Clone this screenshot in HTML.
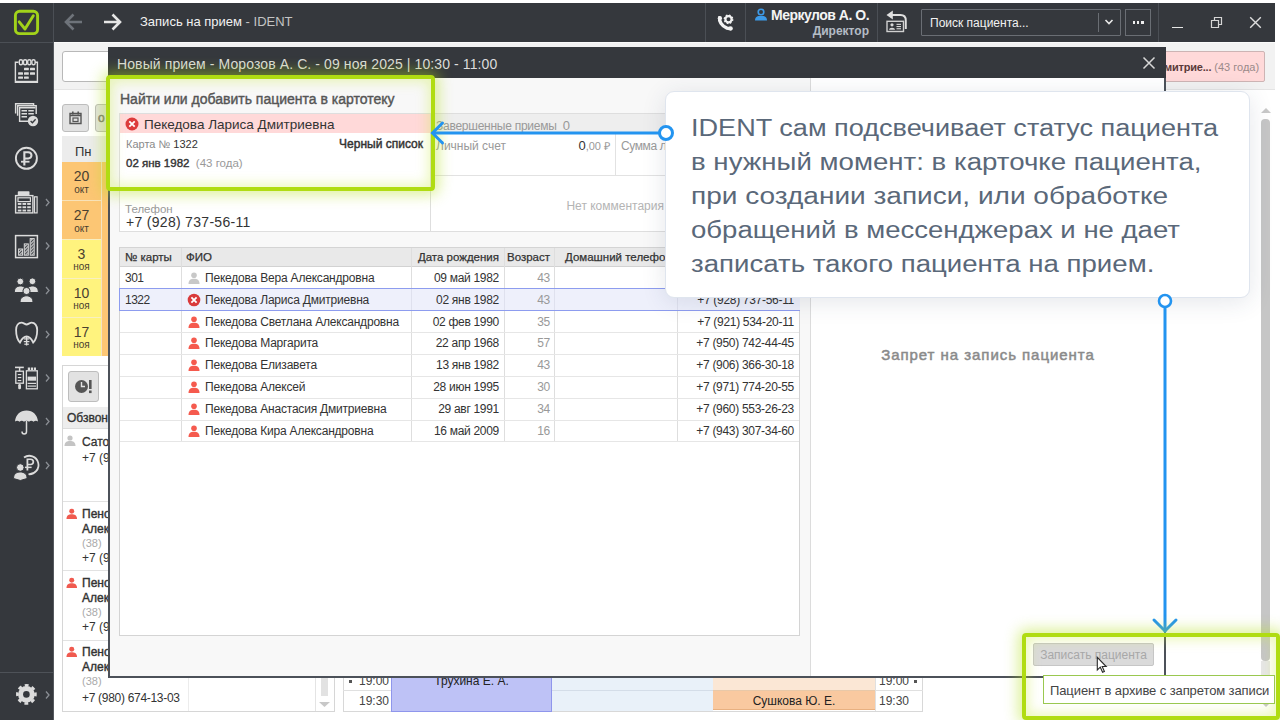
<!DOCTYPE html>
<html><head><meta charset="utf-8">
<style>
*{margin:0;padding:0;box-sizing:border-box}
html,body{width:1280px;height:720px;overflow:hidden;background:#fff;font-family:"Liberation Sans",sans-serif;position:relative}
.a{position:absolute}
.t{position:absolute;white-space:nowrap;line-height:1}
</style></head><body>
<!-- background content -->
<div class="a" style="left:54px;top:42px;width:1221px;height:678px;background:#fff"></div>
<div class="a" style="left:54px;top:42px;width:1221px;height:1px;background:#fafafa"></div>
<div class="a" style="left:54px;top:43px;width:1221px;height:47px;background:#f2f2f2;border-bottom:1px solid #e4e4e4"></div>
<div class="a" style="left:62px;top:51px;width:200px;height:31px;background:#fff;border:1px solid #b8b8b8;border-radius:3px"></div>
<!-- pink badge -->
<div class="a" style="left:1100px;top:51px;width:165px;height:31px;background:#ffd9d9;border:1px solid #cdb4b4;border-radius:2px"></div>
<div class="t" style="left:1164px;top:62px;font-size:11px;color:#5a3a3a;font-weight:bold;letter-spacing:-0.2px">митрие...<span style="font-weight:normal;color:#9a8a8a;letter-spacing:0"> (43 года)</span></div>
<!-- scrollbar right -->
<svg class="a" style="left:1259px;top:106px" width="14" height="8" viewBox="0 0 14 8"><path d="M2 7 L7 2 L12 7 Z" fill="#c8c8c8"/></svg>
<div class="a" style="left:1261px;top:119px;width:9px;height:542px;background:#c6c6c6;border-radius:4px"></div>
<div class="a" style="left:1261px;top:661px;width:9px;height:40px;background:#e6e6e6"></div>
<svg class="a" style="left:1259px;top:701px" width="14" height="8" viewBox="0 0 14 8"><path d="M2 1 L7 6 L12 1 Z" fill="#c8c8c8"/></svg>
<!-- calendar buttons -->
<div class="a" style="left:62px;top:104px;width:27px;height:28px;background:#e2e2e2;border:1px solid #bdbdbd;border-radius:3px"></div>
<svg class="a" style="left:68px;top:110px" width="15" height="15" viewBox="0 0 15 15"><path d="M2 3.5 H13 V13.5 H2 Z M2 5.5 H13" fill="none" stroke="#555" stroke-width="1.4"/><rect x="4" y="1.5" width="1.6" height="3" fill="#555"/><rect x="9.4" y="1.5" width="1.6" height="3" fill="#555"/><rect x="5" y="8" width="5" height="3.5" fill="none" stroke="#555" stroke-width="1.2"/></svg>
<div class="a" style="left:95px;top:104px;width:40px;height:28px;background:#e2e2e2;border:1px solid #bdbdbd;border-radius:3px"></div>
<div class="t" style="left:98px;top:112px;font-size:12px;color:#777;-webkit-text-stroke:0.5px #777">о</div>
<!-- week calendar column -->
<div class="a" style="left:62px;top:136px;width:60px;height:26px;background:#ececec"></div>
<div class="t" style="left:75px;top:144.5px;font-size:13px;color:#333">Пн</div>
<div class="a" style="left:62px;top:162px;width:39px;height:77px;background:#fcc674"></div>
<div class="a" style="left:62px;top:239px;width:39px;height:117px;background:#fff37e"></div>
<div class="a" style="left:102px;top:162px;width:20px;height:194px;background:#fcc674"></div>
<div class="a" style="left:101px;top:162px;width:1px;height:194px;background:#f2e3c4"></div>
<div class="a" style="left:62px;top:200px;width:39px;height:1px;background:#f8e2b8"></div>
<div class="a" style="left:62px;top:239px;width:39px;height:1px;background:#f8eec0"></div>
<div class="a" style="left:62px;top:278px;width:39px;height:1px;background:#f8f0c0"></div>
<div class="a" style="left:62px;top:317px;width:39px;height:1px;background:#f8f0c0"></div>
<div class="t" style="left:62px;top:169px;width:39px;text-align:center;font-size:14px;color:#4a4030">20</div>
<div class="t" style="left:62px;top:185px;width:39px;text-align:center;font-size:10px;color:#4a4030">окт</div>
<div class="t" style="left:62px;top:208px;width:39px;text-align:center;font-size:14px;color:#4a4030">27</div>
<div class="t" style="left:62px;top:224px;width:39px;text-align:center;font-size:10px;color:#4a4030">окт</div>
<div class="t" style="left:62px;top:247px;width:39px;text-align:center;font-size:14px;color:#4a4030">3</div>
<div class="t" style="left:62px;top:262px;width:39px;text-align:center;font-size:10px;color:#4a4030">ноя</div>
<div class="t" style="left:62px;top:286px;width:39px;text-align:center;font-size:14px;color:#4a4030">10</div>
<div class="t" style="left:62px;top:301px;width:39px;text-align:center;font-size:10px;color:#4a4030">ноя</div>
<div class="t" style="left:62px;top:325px;width:39px;text-align:center;font-size:14px;color:#4a4030">17</div>
<div class="t" style="left:62px;top:340px;width:39px;text-align:center;font-size:10px;color:#4a4030">ноя</div>
<!-- Obzvon panel -->
<div class="a" style="left:62px;top:365px;width:273px;height:347px;background:#fff;border:1px solid #d6d6d6"></div>
<div class="a" style="left:68px;top:371px;width:31px;height:31px;background:#e2e2e2;border:1px solid #bdbdbd;border-radius:3px"></div>
<svg class="a" style="left:74px;top:378px" width="20" height="17" viewBox="0 0 20 17"><circle cx="7.5" cy="8.5" r="6.5" fill="#555"/><path d="M7.5 4 V8.5 H11" fill="none" stroke="#e2e2e2" stroke-width="1.4"/><rect x="15" y="2" width="2.6" height="9" fill="#555"/><rect x="15" y="12.5" width="2.6" height="2.6" fill="#555"/></svg>
<div class="a" style="left:63px;top:407px;width:271px;height:22px;background:#ededed;border-bottom:1px solid #dcdcdc"></div>
<div class="t" style="left:67px;top:412px;font-size:12px;color:#333;-webkit-text-stroke:0.35px #333">Обзвон</div>
<svg class="a" style="left:64px;top:435px" width="12" height="11" viewBox="0 0 12 11"><circle cx="6" cy="3" r="2.6" fill="#c4c4c4"/><path d="M0.5 11 C0.5 7 3 6 6 6 C9 6 11.5 7 11.5 11 Z" fill="#c4c4c4"/></svg>
<div class="t" style="left:82px;top:436px;font-size:12px;color:#333;-webkit-text-stroke:0.3px #333">Сато</div>
<div class="t" style="left:82px;top:452px;font-size:12px;color:#333">+7 (9</div>
<div class="a" style="left:63px;top:501px;width:271px;height:1px;background:#e2e2e2"></div>
<div class="a" style="left:63px;top:570px;width:271px;height:1px;background:#e2e2e2"></div>
<div class="a" style="left:63px;top:640px;width:271px;height:1px;background:#e2e2e2"></div>
<div class="a" style="left:188px;top:641px;width:1px;height:70px;background:#ececec"></div>
<div class="a" style="left:315px;top:641px;width:1px;height:70px;background:#e4e4e4"></div>
<div class="a" style="left:321px;top:660px;width:7px;height:36px;background:#e2e2e2"></div>
<svg class="a" style="left:318px;top:701px" width="13" height="7" viewBox="0 0 13 7"><path d="M1 1 L6.5 6 L12 1 Z" fill="#c8c8c8"/></svg>
<!-- patient rows -->
<svg class="a" style="left:65.5px;top:507.5px" width="11.5" height="11.5" viewBox="0 0 12 11"><circle cx="6" cy="3" r="2.6" fill="#f05a4f"/><path d="M0.5 11 C0.5 7 3 6 6 6 C9 6 11.5 7 11.5 11 Z" fill="#f05a4f"/></svg>
<div class="t" style="left:82px;top:508px;font-size:12px;color:#333;-webkit-text-stroke:0.4px #333">Пено</div>
<div class="t" style="left:82px;top:523px;font-size:12px;color:#333;-webkit-text-stroke:0.4px #333">Алек</div>
<div class="t" style="left:82px;top:538px;font-size:11px;color:#aaa">(38)</div>
<div class="t" style="left:82px;top:552px;font-size:12px;color:#333">+7 (9</div>
<svg class="a" style="left:65.5px;top:576.5px" width="11.5" height="11.5" viewBox="0 0 12 11"><circle cx="6" cy="3" r="2.6" fill="#f05a4f"/><path d="M0.5 11 C0.5 7 3 6 6 6 C9 6 11.5 7 11.5 11 Z" fill="#f05a4f"/></svg>
<div class="t" style="left:82px;top:577px;font-size:12px;color:#333;-webkit-text-stroke:0.4px #333">Пено</div>
<div class="t" style="left:82px;top:592px;font-size:12px;color:#333;-webkit-text-stroke:0.4px #333">Алек</div>
<div class="t" style="left:82px;top:607px;font-size:11px;color:#aaa">(38)</div>
<div class="t" style="left:82px;top:621px;font-size:12px;color:#333">+7 (9</div>
<svg class="a" style="left:65.5px;top:645.5px" width="11.5" height="11.5" viewBox="0 0 12 11"><circle cx="6" cy="3" r="2.6" fill="#f05a4f"/><path d="M0.5 11 C0.5 7 3 6 6 6 C9 6 11.5 7 11.5 11 Z" fill="#f05a4f"/></svg>
<div class="t" style="left:82px;top:646px;font-size:12px;color:#333;-webkit-text-stroke:0.4px #333">Пено</div>
<div class="t" style="left:82px;top:661px;font-size:12px;color:#333;-webkit-text-stroke:0.4px #333">Алек</div>
<div class="t" style="left:82px;top:676px;font-size:11px;color:#aaa">(38)</div>
<div class="t" style="left:82px;top:692px;font-size:12px;color:#333;letter-spacing:-0.3px">+7 (980) 674-13-03</div>
<!-- schedule grid -->
<div class="a" style="left:343px;top:670px;width:580px;height:41px;background:#fff"></div>
<div class="a" style="left:343px;top:670px;width:1px;height:42px;background:#d8d8d8"></div>
<div class="a" style="left:343px;top:690px;width:48px;height:1px;background:#e0e0e0"></div>
<div class="a" style="left:343px;top:711px;width:580px;height:1px;background:#d8d8d8"></div>
<div class="a" style="left:349px;top:680px;width:3px;height:3px;background:#555"></div>
<div class="t" style="left:357px;top:675px;width:32px;text-align:right;font-size:12px;color:#444">19:00</div>
<div class="t" style="left:357px;top:695px;width:32px;text-align:right;font-size:12px;color:#444">19:30</div>
<div class="a" style="left:391px;top:670px;width:161px;height:42px;background:#bec2f6;border:1px solid #8f96ec;border-top:none"></div>
<div class="t" style="left:391px;top:674.5px;width:161px;text-align:center;font-size:12px;color:#222">Трухина Е. А.</div>
<div class="a" style="left:552px;top:670px;width:161px;height:41px;background:#e9f1f9"></div>
<div class="a" style="left:552px;top:690px;width:161px;height:1px;background:#d4dde8"></div>
<div class="a" style="left:713px;top:670px;width:162px;height:21px;background:#fbe7d5"></div>
<div class="a" style="left:713px;top:691px;width:162px;height:19px;background:#f9c9a0;border-bottom:1px solid #e8b080"></div>
<div class="a" style="left:713px;top:690px;width:162px;height:1px;background:#e8c8a8"></div>
<div class="t" style="left:713px;top:695px;width:162px;text-align:center;font-size:12px;color:#222">Сушкова Ю. Е.</div>
<div class="a" style="left:875px;top:670px;width:48px;height:41px;background:#fff;border-left:1px solid #e0e0e0;border-right:1px solid #d8d8d8"></div>
<div class="a" style="left:875px;top:690px;width:48px;height:1px;background:#e0e0e0"></div>
<div class="t" style="left:879px;top:675px;font-size:12px;color:#444">19:00</div>
<div class="a" style="left:914px;top:680px;width:3px;height:3px;background:#555"></div>
<div class="t" style="left:879px;top:695px;font-size:12px;color:#444">19:30</div>
<!-- top bar -->
<div class="a" style="left:0;top:0;width:1280px;height:3px;background:#fff"></div>
<div class="a" style="left:0;top:3px;width:1275px;height:39px;background:#35383d"></div>
<div class="a" style="left:0;top:42px;width:53px;height:678px;background:#35383d"></div>
<div class="a" style="left:0;top:42px;width:53px;height:1px;background:#4b4f55"></div>
<div class="a" style="left:53px;top:3px;width:1px;height:39px;background:#4b4f55"></div>
<div class="a" style="left:53px;top:42px;width:1px;height:678px;background:#55595e"></div>
<!-- logo -->
<svg class="a" style="left:12px;top:8px" width="30" height="30" viewBox="0 0 30 30">
<rect x="3.4" y="3.3" width="22.2" height="22.3" rx="4.2" fill="none" stroke="#a2d31a" stroke-width="2.9"/>
<path d="M7.2 13.8 L13 21 L21.3 7.8" fill="none" stroke="#a2d31a" stroke-width="2.9" stroke-linecap="round" stroke-linejoin="round"/>
</svg>
<!-- arrows -->
<svg class="a" style="left:64px;top:12px" width="20" height="20" viewBox="0 0 20 20">
<path d="M2 10 H18 M9.5 2.5 L2 10 L9.5 17.5" fill="none" stroke="#6e737a" stroke-width="2.6"/>
</svg>
<svg class="a" style="left:102px;top:12px" width="20" height="20" viewBox="0 0 20 20">
<path d="M2 10 H18 M10.5 2.5 L18 10 L10.5 17.5" fill="none" stroke="#e6e6e6" stroke-width="2.6"/>
</svg>
<div class="t" style="left:140px;top:15px;font-size:13px;color:#f2f2f2">Запись на прием <span style="color:#c4c4c4">- IDENT</span></div>
<!-- separators -->
<div class="a" style="left:705px;top:3px;width:1px;height:39px;background:#4b4f55"></div>
<div class="a" style="left:745px;top:3px;width:1px;height:39px;background:#4b4f55"></div>
<div class="a" style="left:877px;top:3px;width:1px;height:39px;background:#4b4f55"></div>
<div class="a" style="left:1158px;top:3px;width:1px;height:39px;background:#4b4f55"></div>
<!-- phone gear -->
<svg class="a" style="left:705px;top:5px" width="40" height="35" viewBox="705 5 40 35">
<path d="M719.6 17.8 C719 21 721.5 26 727 28.2 L730.8 28.8" fill="none" stroke="#f2f2f2" stroke-width="3.4" stroke-linecap="round"/>
<circle cx="719.9" cy="18.2" r="2.1" fill="#f2f2f2"/><circle cx="730.6" cy="28.4" r="2.1" fill="#f2f2f2"/>
<circle cx="728.5" cy="19.3" r="3.1" fill="none" stroke="#f2f2f2" stroke-width="2.2"/>
<circle cx="728.5" cy="19.3" r="4.1" fill="none" stroke="#f2f2f2" stroke-width="1.6" stroke-dasharray="1.6 1.62"/>
</svg>
<!-- user -->
<svg class="a" style="left:754px;top:8px" width="14" height="13" viewBox="0 0 14 13">
<circle cx="7" cy="4" r="2.8" fill="none" stroke="#3d9be9" stroke-width="1.6"/>
<path d="M1 12.5 C1 9 3.5 8 5 8 L9 8 C10.5 8 13 9 13 12.5 Z" fill="#3d9be9"/>
</svg>
<div class="t" style="left:771px;top:8px;font-size:14px;color:#f4f4f4;font-weight:bold;letter-spacing:-0.5px">Меркулов А. О.</div>
<div class="t" style="left:810px;top:25px;width:59px;text-align:right;font-size:12px;color:#b4bcc6;font-weight:bold">Директор</div>
<!-- return card icon -->
<svg class="a" style="left:885px;top:9px" width="26" height="25" viewBox="0 0 26 25">
<path d="M7 6 H15.5 C19 6 20.8 8.5 20.8 11.5 V20" fill="none" stroke="#e0e0e0" stroke-width="1.9"/>
<path d="M1.5 6 L7.8 1.5 V10.5 Z" fill="#e0e0e0"/>
<rect x="2" y="12.3" width="16.5" height="10.2" fill="none" stroke="#d0d0d0" stroke-width="1.4"/>
<circle cx="7" cy="15.8" r="1.6" fill="#d8d8d8"/>
<path d="M4 20.8 C4 18 10 18 10 20.8 Z" fill="#d8d8d8"/>
<rect x="11.5" y="14.8" width="4.5" height="1.1" fill="#d8d8d8"/><rect x="11.5" y="17" width="4.5" height="1.1" fill="#d8d8d8"/><rect x="11.5" y="19.2" width="4.5" height="1.1" fill="#d8d8d8"/>
</svg>
<!-- search -->
<div class="a" style="left:921px;top:9px;width:200px;height:27px;border:1px solid #6a6e74;border-radius:1px"></div>
<div class="t" style="left:930px;top:17px;font-size:12px;color:#f2f2f2">Поиск пациента...</div>
<div class="a" style="left:1098px;top:13px;width:1px;height:19px;background:#6a6e74"></div>
<svg class="a" style="left:1104px;top:18px" width="10" height="8" viewBox="0 0 10 8"><path d="M1.5 2 L5 5.5 L8.5 2" fill="none" stroke="#e8e8e8" stroke-width="1.6"/></svg>
<div class="a" style="left:1125px;top:9px;width:26px;height:27px;border:1px solid #6a6e74"></div>
<div class="a" style="left:1132.5px;top:21px;width:2.6px;height:2.6px;background:#eee"></div>
<div class="a" style="left:1136.8px;top:21px;width:2.6px;height:2.6px;background:#eee"></div>
<div class="a" style="left:1141.1px;top:21px;width:2.6px;height:2.6px;background:#eee"></div>
<!-- window buttons -->
<div class="a" style="left:1172px;top:27px;width:11px;height:1.3px;background:#e6e6e6"></div>
<svg class="a" style="left:1210px;top:16px" width="14" height="14" viewBox="0 0 14 14"><path d="M1.5 4.5 H8.5 V11.5 H1.5 Z M4.5 4.5 V1.5 H11.5 V8.5 H8.5" fill="none" stroke="#d6d6d6" stroke-width="1.2"/></svg>
<svg class="a" style="left:1249px;top:16px" width="13" height="13" viewBox="0 0 13 13"><path d="M1.2 1.2 L11.8 11.8 M11.8 1.2 L1.2 11.8" fill="none" stroke="#dedede" stroke-width="1.4"/></svg>
<!-- sidebar icons -->
<svg class="a" style="left:0;top:43px" width="53" height="677" viewBox="0 43 53 677">
<defs>
<pattern id="hatch" width="2.2" height="2.2" patternUnits="userSpaceOnUse" patternTransform="rotate(45)"><rect width="1.1" height="2.2" fill="#dcdcdc"/></pattern>
</defs>
<g fill="none" stroke="#dcdcdc" stroke-width="1.4">
 <!-- calendar -->
 <path d="M18.5 62.3 H15.4 V82.2 H37.4 V62.3 H35"/>
 <path d="M15.4 81.8 H37.4" stroke-width="2"/>
 <rect x="19.3" y="59.7" width="3.2" height="5" rx="1.5"/><rect x="23.5" y="59.7" width="3.2" height="5" rx="1.5"/><rect x="27.7" y="59.7" width="3.2" height="5" rx="1.5"/><rect x="31.9" y="59.7" width="3.2" height="5" rx="1.5"/>
 <!-- list check -->
 <path d="M15.6 113.5 V103.7 H33.6 V105.8"/>
 <path d="M17.6 115.8 V105.8 H36.2 V114"/>
 <path d="M28 121.3 H19.6 V107.8 H35.5"/>
 <circle cx="26.4" cy="158.3" r="10.5" stroke-width="1.9"/>
 <!-- calculator -->
 <rect x="15.6" y="195.6" width="17.3" height="17.3"/>
 <rect x="18" y="197.8" width="12.4" height="3.8" stroke-width="1.2"/>
 <rect x="34.5" y="196.8" width="2.6" height="16.1" stroke-width="1.2"/>
 <!-- chart -->
 <rect x="15.6" y="235.6" width="21.8" height="22" stroke-width="1.5"/>
 <rect x="18.6" y="249" width="4" height="6.2" stroke-width="1"/><rect x="24.3" y="243.9" width="4" height="11.3" stroke-width="1"/><rect x="30.2" y="238.6" width="4" height="16.6" stroke-width="1"/>
 <!-- tooth -->
 <path d="M20 342.5 C17.5 340 16.1 335 16.1 330 C16.1 325.5 18.5 322.6 21.5 322.6 C23.5 322.6 25 324.5 26.6 324.5 C28.2 324.5 29.7 322.6 31.7 322.6 C34.7 322.6 37.2 325.5 37.2 330 C37.2 335 35.8 340 33.2 342.5 C32 340 30 336.5 26.6 336.5 C23.2 336.5 21.2 340 20 342.5 Z" stroke-width="1.8"/>
 <!-- medicine -->
 <rect x="15.8" y="371.2" width="7.6" height="12" stroke-width="1.3"/>
 <rect x="26.4" y="370.8" width="10.9" height="18" stroke-width="1.3"/>
 <!-- umbrella handle -->
 <path d="M26.5 421 V431.5 C26.5 434.8 22 434.8 22 431.5" stroke-width="1.5"/>
 <!-- ruble person circle -->
 <path d="M24 457.5 A9.2 9.2 0 1 1 28.5 474.2" stroke-width="1.8"/>
</g>
<g fill="#dcdcdc">
 <!-- calendar blocks -->
 <rect x="24" y="67.8" width="4.8" height="2.4" rx="0.5"/><rect x="30" y="67.8" width="5" height="2.4" rx="0.5"/>
 <rect x="18.1" y="72.2" width="4.9" height="2.5" rx="0.5"/><rect x="24" y="72.2" width="4.8" height="2.5" rx="0.5"/><rect x="30" y="72.2" width="5" height="2.5" rx="0.5"/>
 <rect x="18.1" y="76.4" width="4.9" height="2.4" rx="0.5"/><rect x="24" y="76.4" width="4.8" height="2.4" rx="0.5"/>
 <!-- list lines -->
 <rect x="21.5" y="110" width="5.5" height="1.5"/><rect x="28.3" y="110" width="5.5" height="1.5"/>
 <rect x="21.5" y="113" width="5.5" height="1.5"/><rect x="28.3" y="113" width="5.5" height="1.5"/>
 <rect x="21.5" y="116" width="5.5" height="1.5"/>
 <circle cx="33" cy="121" r="5.2"/>
 <!-- ruble sign -->
 <path d="M23.3 151.3 H28.2 C31.2 151.3 32.5 153.2 32.5 155.3 C32.5 157.6 31 159.4 28.2 159.4 H25.4 V165.5 H23.3 Z M25.4 153.2 V157.5 H28 C29.6 157.5 30.4 156.6 30.4 155.3 C30.4 154 29.6 153.2 28 153.2 Z"/>
 <rect x="21" y="160.8" width="8.5" height="1.8"/>
 <!-- calculator -->
 <rect x="17.8" y="191.3" width="11.7" height="4.3" rx="0.8"/>
 <rect x="17.8" y="203" width="3.6" height="1.9"/><rect x="22.5" y="203" width="3.6" height="1.9"/><rect x="27.2" y="203" width="3.6" height="1.9"/>
 <rect x="17.8" y="206.3" width="3.6" height="1.9"/><rect x="22.5" y="206.3" width="3.6" height="1.9"/><rect x="27.2" y="206.3" width="3.6" height="1.9"/>
 <rect x="17.8" y="209.6" width="3.6" height="1.9"/><rect x="22.5" y="209.6" width="3.6" height="1.9"/><rect x="27.2" y="209.6" width="3.6" height="1.9"/>
 <!-- chart hatch -->
 <rect x="19" y="249.4" width="3.2" height="5.4" fill="url(#hatch)"/><rect x="24.7" y="244.3" width="3.2" height="10.5" fill="url(#hatch)"/><rect x="30.6" y="239" width="3.2" height="15.8" fill="url(#hatch)"/>
 <!-- people -->
 <g stroke="#35383d" stroke-width="1">
 <circle cx="20.3" cy="281.5" r="3.4"/><path d="M14.3 292.5 C14.3 288 16.8 286 20.3 286 C23.8 286 26.3 288 26.3 292.5 Z"/>
 <circle cx="32.4" cy="281.3" r="3.4"/><path d="M26.4 292.5 C26.4 288 28.9 286 32.4 286 C35.9 286 38.4 288 38.4 292.5 Z"/>
 <circle cx="26.5" cy="291" r="3.6"/><path d="M20 302.5 C20 298 23 295.8 26.5 295.8 C30 295.8 33 298 33 302.5 Z"/>
 </g>
 <!-- tooth tree -->
 <rect x="25.9" y="336" width="1.4" height="9.5"/><rect x="23.8" y="338.3" width="5.6" height="1.2"/><rect x="23.8" y="341" width="5.6" height="1.2"/><rect x="24.3" y="343.6" width="4.6" height="1.2"/>
 <!-- medicine -->
 <rect x="15" y="366.6" width="8.8" height="1.6"/><rect x="18.9" y="368" width="1.4" height="3.3"/>
 <rect x="17.8" y="374" width="3.5" height="1.1"/><rect x="17.8" y="377" width="3.5" height="1.1"/><rect x="17.8" y="380" width="3.5" height="1.1"/>
 <rect x="18.2" y="384" width="2.8" height="5.2" rx="1.2"/>
 <rect x="27.8" y="367.5" width="2.2" height="2.6"/><rect x="30.8" y="367.5" width="2.2" height="2.6"/><rect x="33.8" y="367.5" width="2.2" height="2.6"/>
 <rect x="27.6" y="376.6" width="8.5" height="4.1"/><rect x="27.6" y="382.8" width="8.5" height="1.2"/><rect x="27.6" y="385.5" width="8.5" height="1.2"/>
 <!-- umbrella -->
 <path d="M15 421.5 C15.5 415 20 410.5 26.5 410.5 C33 410.5 37.5 415 38 421.5 C36.5 420.5 35 420.5 33.5 421.8 C32 420.5 30.5 420.5 29 421.8 C27.5 420.5 25.5 420.5 24 421.8 C22.5 420.5 21 420.5 19.5 421.8 C18 420.5 16.5 420.5 15 421.5 Z"/>
 <!-- ruble-person -->
 <path d="M26.5 458.5 H30.6 C33.1 458.5 34.2 460 34.2 461.8 C34.2 463.8 33 465.3 30.6 465.3 H28.3 V470.6 H26.5 Z M28.3 460 V463.8 H30.4 C31.8 463.8 32.4 463 32.4 461.8 C32.4 460.7 31.8 460 30.4 460 Z"/>
 <rect x="25" y="466.6" width="6.6" height="1.5"/>
 <g stroke="#35383d" stroke-width="1"><circle cx="20.3" cy="467.5" r="3.8"/><path d="M13.5 478.5 C13.5 474 16.5 472 20.3 472 C24.1 472 27.1 474 27.1 478.5 L20.3 480.5 Z"/></g>
 <!-- gear -->
 <circle cx="26.4" cy="694.4" r="8.3"/>
 <circle cx="26.4" cy="694.4" r="9.1" fill="none" stroke="#dcdcdc" stroke-width="2.6" stroke-dasharray="3.75 3.4" transform="rotate(-12 26.4 694.4)"/>
 <circle cx="26.4" cy="694.4" r="3.3" fill="#35383d"/>
</g>
<!-- check mark on list icon -->
<path d="M30.6 121 L32.4 122.8 L35.6 119.3" fill="none" stroke="#35383d" stroke-width="1.3"/>
<g fill="none" stroke="#8a8e94" stroke-width="1.3">
 <path d="M46 199 L49 202.5 L46 206"/>
 <path d="M46 242.5 L49 246 L46 249.5"/>
 <path d="M46 287 L49 290.5 L46 294"/>
 <path d="M46 331 L49 334.5 L46 338"/>
 <path d="M46 374.5 L49 378 L46 381.5"/>
 <path d="M46 418 L49 421.5 L46 425"/>
 <path d="M46 462 L49 465.5 L46 469"/>
 <path d="M46 691.5 L49 695 L46 698.5"/>
</g>
<rect x="0" y="672" width="53" height="1" fill="#4e5258"/>
</svg>
<!-- dialog -->
<div class="a" style="left:108px;top:47px;width:1058px;height:631px;background:#f8f8f8;border:2px solid #4c5159;border-top:none"></div>
<div class="a" style="left:108px;top:47px;width:1058px;height:31px;background:#35383d"></div>
<div class="t" style="left:117px;top:56.5px;font-size:14px;color:#dcdcdc;letter-spacing:0.1px">Новый прием - Морозов А. С. - 09 ноя 2025 | 10:30 - 11:00</div>
<svg class="a" style="left:1142px;top:56px" width="14" height="14" viewBox="0 0 14 14"><path d="M1.5 1.5 L12.5 12.5 M12.5 1.5 L1.5 12.5" fill="none" stroke="#d8d8d8" stroke-width="1.5"/></svg>
<!-- right panel -->
<div class="a" style="left:810px;top:78px;width:354px;height:598px;background:#fff;border-left:1px solid #dcdcdc"></div>
<div class="t" style="left:810px;top:346.5px;width:355px;text-align:center;font-size:15px;color:#8a8a8a;-webkit-text-stroke:0.5px #8a8a8a;letter-spacing:0.95px;text-indent:0.95px">Запрет на запись пациента</div>
<div class="a" style="left:1033px;top:643px;width:121px;height:23px;background:#dadada;border:1px solid #c6c6c6;border-radius:2px"></div>
<div class="t" style="left:1033px;top:649px;width:121px;text-align:center;font-size:12px;color:#a8a8a8">Записать пациента</div>
<!-- header title -->
<div class="t" style="left:120px;top:92px;font-size:14px;color:#555;-webkit-text-stroke:0.4px #555">Найти или добавить пациента в картотеку</div>
<!-- left card -->
<div class="a" style="left:119px;top:113px;width:312px;height:119px;background:#fff;border:1px solid #dedede"></div>
<div class="a" style="left:120px;top:114px;width:310px;height:19px;background:#ffd9d9"></div>
<svg class="a" style="left:125px;top:117px" width="14" height="14" viewBox="0 0 14 14"><circle cx="7" cy="7" r="6.5" fill="#dd3b3b"/><path d="M4.3 4.3 L9.7 9.7 M9.7 4.3 L4.3 9.7" stroke="#fff" stroke-width="1.8"/></svg>
<div class="t" style="left:144px;top:118px;font-size:13.5px;color:#333">Пекедова Лариса Дмитриевна</div>
<div class="t" style="left:126px;top:139px;font-size:11px;color:#8a8a8a">Карта № <span style="color:#333">1322</span></div>
<div class="t" style="left:300px;top:138px;width:123px;text-align:right;font-size:12px;color:#333;-webkit-text-stroke:0.45px #333">Черный список</div>
<div class="t" style="left:126px;top:158px;font-size:11.5px;color:#333"><span style="-webkit-text-stroke:0.4px #333">02 янв 1982</span> <span style="color:#999">&nbsp;(43 года)</span></div>
<div class="t" style="left:125px;top:203.5px;font-size:11.5px;color:#999">Телефон</div>
<div class="t" style="left:126px;top:215px;font-size:14px;color:#333;letter-spacing:0.3px">+7 (928) 737-56-11</div>
<!-- middle -->
<div class="a" style="left:431px;top:113px;width:379px;height:119px;background:#fff;border-top:1px solid #dedede;border-bottom:1px solid #dedede"></div>
<div class="a" style="left:431px;top:114px;width:379px;height:20px;background:#eeeeee"></div>
<div class="t" style="left:436px;top:118.5px;font-size:12px;color:#999;letter-spacing:-0.25px">Завершенные приемы &nbsp;<span style="font-size:13px;letter-spacing:0">0</span></div>
<div class="t" style="left:436px;top:140px;font-size:12px;color:#999">Личный счет</div>
<div class="t" style="left:540px;top:138.5px;width:70px;text-align:right;font-size:13px;color:#333">0<span style="font-size:11px;color:#999">,00 ₽</span></div>
<div class="a" style="left:615px;top:134px;width:1px;height:41px;background:#e2e2e2"></div>
<div class="t" style="left:621px;top:140px;font-size:12px;color:#999;letter-spacing:-0.4px">Сумма л</div>
<div class="a" style="left:431px;top:175px;width:379px;height:1px;background:#e2e2e2"></div>
<div class="t" style="left:560px;top:200px;width:104px;text-align:right;font-size:12px;color:#b4b4b4">Нет комментария</div>
<!-- table -->
<div class="a" style="left:119px;top:247px;width:681px;height:389px;background:#fff;border:1px solid #d4d4d4"></div>
<div class="a" style="left:120px;top:248px;width:679px;height:19px;background:#e9e9e9;border-bottom:1px solid #d2d2d2"></div>
<div class="a" style="left:181px;top:248px;width:1px;height:193px;background:#dedede"></div>
<div class="a" style="left:411px;top:248px;width:1px;height:193px;background:#dedede"></div>
<div class="a" style="left:504px;top:248px;width:1px;height:193px;background:#dedede"></div>
<div class="a" style="left:554px;top:248px;width:1px;height:193px;background:#dedede"></div>
<div class="a" style="left:677px;top:248px;width:1px;height:193px;background:#dedede"></div>
<div class="t" style="left:125px;top:251.5px;font-size:11.5px;color:#333;-webkit-text-stroke:0.25px #333">№ карты</div>
<div class="t" style="left:186px;top:251.5px;font-size:11.5px;color:#333;-webkit-text-stroke:0.25px #333">ФИО</div>
<div class="t" style="left:400px;top:251.5px;width:99px;text-align:right;font-size:11.5px;color:#333;-webkit-text-stroke:0.25px #333">Дата рождения</div>
<div class="t" style="left:500px;top:251.5px;width:50px;text-align:right;font-size:11.5px;color:#333;-webkit-text-stroke:0.25px #333">Возраст</div>
<div class="t" style="left:565px;top:251.5px;font-size:11.5px;color:#333;-webkit-text-stroke:0.25px #333">Домашний телефон</div>
<div class="a" style="left:120px;top:289px;width:679px;height:1px;background:#e6e6e6"></div>
<div class="t" style="left:125px;top:272px;font-size:12px;color:#333;letter-spacing:-0.5px">301</div>
<svg class="a" style="left:188px;top:272px" width="12" height="12" viewBox="0 0 12 12"><circle cx="6" cy="3.2" r="2.8" fill="#c8c8c8"/><path d="M0.5 12 C0.5 8 3 6.8 6 6.8 C9 6.8 11.5 8 11.5 12 Z" fill="#c8c8c8"/></svg>
<div class="t" style="left:205px;top:272px;font-size:12px;color:#333;letter-spacing:-0.2px">Пекедова Вера Александровна</div>
<div class="t" style="left:411px;top:272px;width:88px;text-align:right;font-size:12px;color:#333;letter-spacing:-0.3px">09 май 1982</div>
<div class="t" style="left:504px;top:272px;width:46px;text-align:right;font-size:12px;color:#999;letter-spacing:-0.3px">43</div>
<div class="a" style="left:119px;top:288px;width:681px;height:23px;background:#eef0fb;border:1px solid #8d9cef;border-right:none"></div>
<div class="a" style="left:181px;top:289px;width:1px;height:21px;background:#dfe1ee"></div>
<div class="a" style="left:411px;top:289px;width:1px;height:21px;background:#dfe1ee"></div>
<div class="a" style="left:504px;top:289px;width:1px;height:21px;background:#dfe1ee"></div>
<div class="a" style="left:554px;top:289px;width:1px;height:21px;background:#dfe1ee"></div>
<div class="a" style="left:677px;top:289px;width:1px;height:21px;background:#dfe1ee"></div>
<div class="t" style="left:125px;top:294px;font-size:12px;color:#333;letter-spacing:-0.5px">1322</div>
<svg class="a" style="left:187px;top:293px" width="14" height="14" viewBox="0 0 14 14"><circle cx="7" cy="7" r="6.3" fill="#d93a3a"/><path d="M4.4 4.4 L9.6 9.6 M9.6 4.4 L4.4 9.6" stroke="#fff" stroke-width="1.8"/></svg>
<div class="t" style="left:205px;top:294px;font-size:12px;color:#333;letter-spacing:-0.2px">Пекедова Лариса Дмитриевна</div>
<div class="t" style="left:411px;top:294px;width:88px;text-align:right;font-size:12px;color:#333;letter-spacing:-0.3px">02 янв 1982</div>
<div class="t" style="left:504px;top:294px;width:46px;text-align:right;font-size:12px;color:#999;letter-spacing:-0.3px">43</div>
<div class="t" style="left:677px;top:294px;width:117px;text-align:right;font-size:12px;color:#333;letter-spacing:-0.3px">+7 (928) 737-56-11</div>
<div class="a" style="left:120px;top:332px;width:679px;height:1px;background:#e6e6e6"></div>
<svg class="a" style="left:188px;top:316px" width="12" height="12" viewBox="0 0 12 12"><circle cx="6" cy="3.2" r="2.8" fill="#f55a4e"/><path d="M0.5 12 C0.5 8 3 6.8 6 6.8 C9 6.8 11.5 8 11.5 12 Z" fill="#f55a4e"/></svg>
<div class="t" style="left:205px;top:316px;font-size:12px;color:#333;letter-spacing:-0.2px">Пекедова Светлана Александровна</div>
<div class="t" style="left:411px;top:316px;width:88px;text-align:right;font-size:12px;color:#333;letter-spacing:-0.3px">02 фев 1990</div>
<div class="t" style="left:504px;top:316px;width:46px;text-align:right;font-size:12px;color:#999;letter-spacing:-0.3px">35</div>
<div class="t" style="left:677px;top:316px;width:117px;text-align:right;font-size:12px;color:#333;letter-spacing:-0.3px">+7 (921) 534-20-11</div>
<div class="a" style="left:120px;top:354px;width:679px;height:1px;background:#e6e6e6"></div>
<svg class="a" style="left:188px;top:337px" width="12" height="12" viewBox="0 0 12 12"><circle cx="6" cy="3.2" r="2.8" fill="#f55a4e"/><path d="M0.5 12 C0.5 8 3 6.8 6 6.8 C9 6.8 11.5 8 11.5 12 Z" fill="#f55a4e"/></svg>
<div class="t" style="left:205px;top:337px;font-size:12px;color:#333;letter-spacing:-0.2px">Пекедова Маргарита</div>
<div class="t" style="left:411px;top:337px;width:88px;text-align:right;font-size:12px;color:#333;letter-spacing:-0.3px">22 апр 1968</div>
<div class="t" style="left:504px;top:337px;width:46px;text-align:right;font-size:12px;color:#999;letter-spacing:-0.3px">57</div>
<div class="t" style="left:677px;top:337px;width:117px;text-align:right;font-size:12px;color:#333;letter-spacing:-0.3px">+7 (950) 742-44-45</div>
<div class="a" style="left:120px;top:376px;width:679px;height:1px;background:#e6e6e6"></div>
<svg class="a" style="left:188px;top:359px" width="12" height="12" viewBox="0 0 12 12"><circle cx="6" cy="3.2" r="2.8" fill="#f55a4e"/><path d="M0.5 12 C0.5 8 3 6.8 6 6.8 C9 6.8 11.5 8 11.5 12 Z" fill="#f55a4e"/></svg>
<div class="t" style="left:205px;top:359px;font-size:12px;color:#333;letter-spacing:-0.2px">Пекедова Елизавета</div>
<div class="t" style="left:411px;top:359px;width:88px;text-align:right;font-size:12px;color:#333;letter-spacing:-0.3px">13 янв 1982</div>
<div class="t" style="left:504px;top:359px;width:46px;text-align:right;font-size:12px;color:#999;letter-spacing:-0.3px">43</div>
<div class="t" style="left:677px;top:359px;width:117px;text-align:right;font-size:12px;color:#333;letter-spacing:-0.3px">+7 (906) 366-30-18</div>
<div class="a" style="left:120px;top:398px;width:679px;height:1px;background:#e6e6e6"></div>
<svg class="a" style="left:188px;top:381px" width="12" height="12" viewBox="0 0 12 12"><circle cx="6" cy="3.2" r="2.8" fill="#f55a4e"/><path d="M0.5 12 C0.5 8 3 6.8 6 6.8 C9 6.8 11.5 8 11.5 12 Z" fill="#f55a4e"/></svg>
<div class="t" style="left:205px;top:381px;font-size:12px;color:#333;letter-spacing:-0.2px">Пекедова Алексей</div>
<div class="t" style="left:411px;top:381px;width:88px;text-align:right;font-size:12px;color:#333;letter-spacing:-0.3px">28 июн 1995</div>
<div class="t" style="left:504px;top:381px;width:46px;text-align:right;font-size:12px;color:#999;letter-spacing:-0.3px">30</div>
<div class="t" style="left:677px;top:381px;width:117px;text-align:right;font-size:12px;color:#333;letter-spacing:-0.3px">+7 (971) 774-20-55</div>
<div class="a" style="left:120px;top:420px;width:679px;height:1px;background:#e6e6e6"></div>
<svg class="a" style="left:188px;top:403px" width="12" height="12" viewBox="0 0 12 12"><circle cx="6" cy="3.2" r="2.8" fill="#f55a4e"/><path d="M0.5 12 C0.5 8 3 6.8 6 6.8 C9 6.8 11.5 8 11.5 12 Z" fill="#f55a4e"/></svg>
<div class="t" style="left:205px;top:403px;font-size:12px;color:#333;letter-spacing:-0.2px">Пекедова Анастасия Дмитриевна</div>
<div class="t" style="left:411px;top:403px;width:88px;text-align:right;font-size:12px;color:#333;letter-spacing:-0.3px">29 авг 1991</div>
<div class="t" style="left:504px;top:403px;width:46px;text-align:right;font-size:12px;color:#999;letter-spacing:-0.3px">34</div>
<div class="t" style="left:677px;top:403px;width:117px;text-align:right;font-size:12px;color:#333;letter-spacing:-0.3px">+7 (960) 553-26-23</div>
<div class="a" style="left:120px;top:441px;width:679px;height:1px;background:#e6e6e6"></div>
<svg class="a" style="left:188px;top:425px" width="12" height="12" viewBox="0 0 12 12"><circle cx="6" cy="3.2" r="2.8" fill="#f55a4e"/><path d="M0.5 12 C0.5 8 3 6.8 6 6.8 C9 6.8 11.5 8 11.5 12 Z" fill="#f55a4e"/></svg>
<div class="t" style="left:205px;top:425px;font-size:12px;color:#333;letter-spacing:-0.2px">Пекедова Кира Александровна</div>
<div class="t" style="left:411px;top:425px;width:88px;text-align:right;font-size:12px;color:#333;letter-spacing:-0.3px">16 май 2009</div>
<div class="t" style="left:504px;top:425px;width:46px;text-align:right;font-size:12px;color:#999;letter-spacing:-0.3px">16</div>
<div class="t" style="left:677px;top:425px;width:117px;text-align:right;font-size:12px;color:#333;letter-spacing:-0.3px">+7 (943) 307-34-60</div>
<!-- overlays -->
<div class="a" style="left:106px;top:75px;width:329px;height:116px;border:4px solid #b0dc12;border-radius:4px;box-shadow:0 0 14px 4px rgba(180,225,30,0.45), inset 0 0 12px 3px rgba(200,235,60,0.35)"></div>
<!-- callout -->
<div class="a" style="left:665px;top:91px;width:585px;height:207px;background:#fff;border:1px solid #dfe5ee;border-radius:9px;box-shadow:0 4px 24px rgba(40,60,90,0.12)"></div>
<div class="t" style="left:691px;top:117px;font-size:23px;color:#5a6879;transform:scaleX(1.178);transform-origin:0 0">IDENT сам подсвечивает статус пациента</div>
<div class="t" style="left:691px;top:151px;font-size:23px;color:#5a6879;transform:scaleX(1.202);transform-origin:0 0">в нужный момент: в карточке пациента,</div>
<div class="t" style="left:691px;top:184.5px;font-size:23px;color:#5a6879;transform:scaleX(1.218);transform-origin:0 0">при создании записи, или обработке</div>
<div class="t" style="left:691px;top:219px;font-size:23px;color:#5a6879;transform:scaleX(1.197);transform-origin:0 0">обращений в мессенджерах и не дает</div>
<div class="t" style="left:691px;top:253px;font-size:23px;color:#5a6879;transform:scaleX(1.201);transform-origin:0 0">записать такого пациента на прием.</div>
<!-- arrows -->
<svg class="a" style="left:0;top:0" width="1280" height="720" viewBox="0 0 1280 720">
<g fill="none" stroke="#2394f0" stroke-width="3" stroke-linecap="round">
<path d="M659 133 H433"/>
<path d="M442.5 123 L432.5 133 L442.5 143"/>
<path d="M1165 308 V631"/>
<path d="M1154 620 L1165 631 L1176 620"/>
</g>
<circle cx="666" cy="133" r="6.5" fill="#fff" stroke="#2394f0" stroke-width="3"/>
<circle cx="1165" cy="301" r="6" fill="#fff" stroke="#2394f0" stroke-width="2.6"/>
</svg>
<!-- green box 2 -->
<div class="a" style="left:1022px;top:633px;width:258px;height:87px;border:4px solid #b0dc12;border-radius:4px;box-shadow:0 0 14px 4px rgba(180,225,30,0.45), inset 0 0 12px 3px rgba(200,235,60,0.35)"></div>
<!-- tooltip -->
<div class="a" style="left:1043px;top:675px;width:232px;height:29px;background:#fff;border:1px solid #9ac850"></div>
<div class="t" style="left:1050px;top:684px;font-size:13px;color:#444;letter-spacing:-0.1px">Пациент в архиве с запретом записи</div>
<!-- cursor -->
<svg class="a" style="left:1096px;top:656px" width="12" height="18" viewBox="0 0 12 18"><path d="M1.3 1.3 V14 L4.3 11.2 L6.6 16.2 L8.4 15.4 L6.2 10.5 H10.2 Z" fill="#fff" stroke="#2a2a2a" stroke-width="1.1" stroke-linejoin="miter"/></svg>
</body></html>
